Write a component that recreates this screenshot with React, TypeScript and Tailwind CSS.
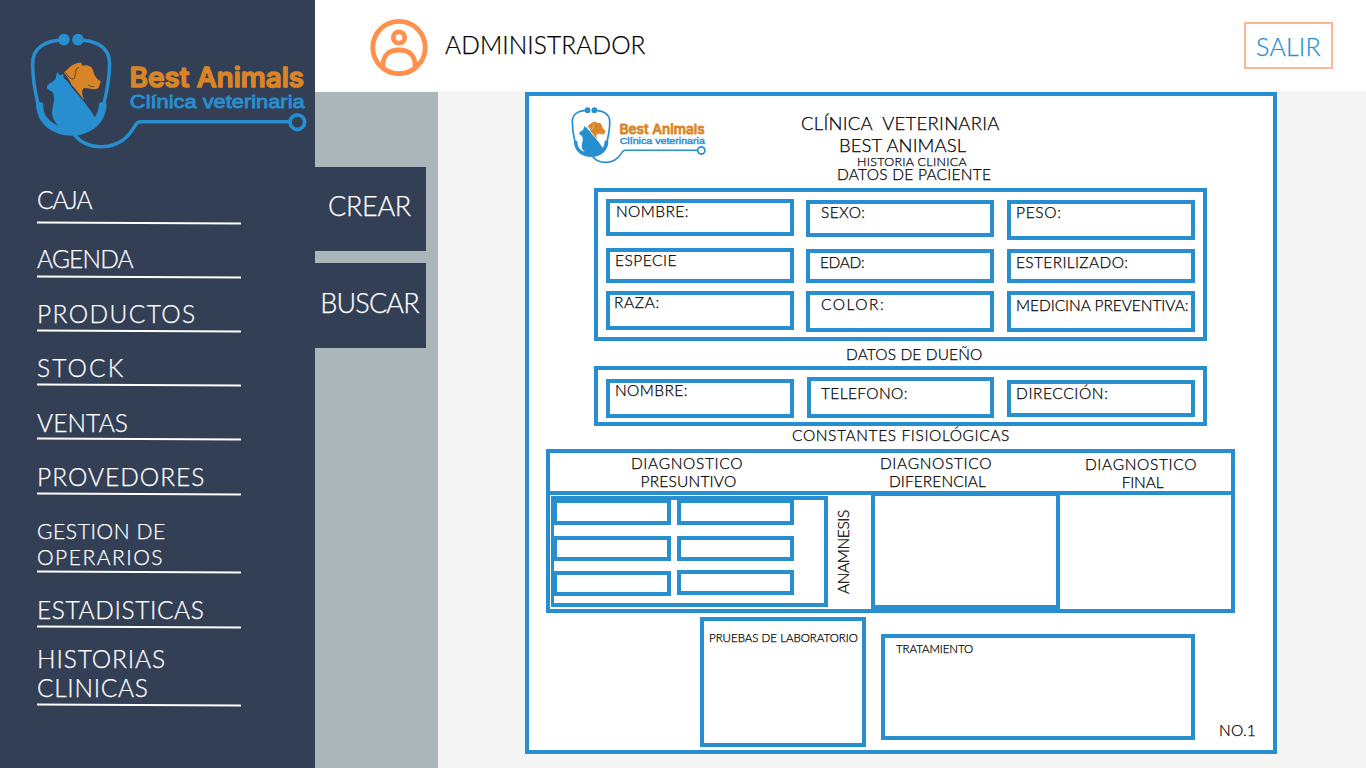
import React from "react";

function Logo({ className, ear }: { className: string; ear: string }) {
  return (
    <svg viewBox="30 40 832 350" className={className} role="img" aria-label="Best Animals Clínica veterinaria">
      <g fill="none" stroke="#278fcf" strokeWidth="10.5" strokeLinecap="round">
        <path d="M132 60 C76 60 38 84 38 130 C38 172 45 215 54 252" />
        <path d="M174 60 C230 60 269 84 269 130 C269 172 261 215 252 252" />
        <path d="M164 346 C184 370 212 382 246 381 C300 380 326 350 345 319 C350 309 354 306 363 306 H806" />
        <circle cx="833" cy="307" r="22" strokeWidth="11" />
      </g>
      <g fill="#278fcf">
        <circle cx="132" cy="59" r="17.5" />
        <circle cx="174" cy="59" r="17.5" />
        <path d="M48 252 C49 245 68 244 70 254 C70 268 71 278 77 288 C87 303 101 311 115 318 C101 301 92 290 98 264 C102 247 104 235 100 222 C98 213 92 216 86 210 C79 204 80 199 83 196 C90 189 98 187 105 180 C109 173 108 166 111 157 L121 167 L129 162 L132 176 C145 183 150 196 160 208 C185 236 207 262 225 292 C232 281 236 268 237 254 C238 244 257 243 260 252 C260 312 209 348 156 348 C98 348 49 312 48 252Z" />
      </g>
      <path
        fill="#d98527"
        d="M132 158 C146 147 155 130 183 128 L187 138 C202 132 217 139 220 153 C222 167 231 178 243 185 C241 191 238 193 238 199 C237 205 230 208 222 208 C210 209 200 201 190 206 C184 215 187 226 193 241 C182 228 168 208 154 194 C150 180 141 170 132 158Z"
      />
      <path d="M177 142 C162 148 170 168 161 177 C153 181 142 166 137 158" fill="none" stroke={ear} strokeWidth="3" />
      <path d="M205 195 C211 200 217 201 223 200" fill="none" stroke={ear} strokeWidth="2.5" />
      <text
        x="329" y="203" textLength="524" lengthAdjust="spacingAndGlyphs" fontSize="82"
        fill="#d98527" stroke="#d98527" strokeWidth="5" strokeLinejoin="round"
        className="font-['Inter',sans-serif] font-medium"
      >
        Best Animals
      </text>
      <text
        x="330" y="265" textLength="525" lengthAdjust="spacingAndGlyphs" fontSize="55"
        fill="#278fcf" stroke="#278fcf" strokeWidth="2.5"
        className="font-['Liberation_Sans',sans-serif]"
      >
        Clínica veterinaria
      </text>
    </svg>
  );
}

const menu = [
  { label: ["CAJA"], box: "h-[54px] pb-[10px]", text: "text-[24.5px] leading-none tracking-[-1px]" },
  { label: ["AGENDA"], box: "h-[54px] pb-[5px]", text: "text-[24.5px] leading-none tracking-[-0.8px]" },
  { label: ["PRODUCTOS"], box: "h-[54px] pb-[4px]", text: "text-[24.5px] leading-none tracking-[1.4px]" },
  { label: ["STOCK"], box: "h-[54px] pb-[4px]", text: "text-[24.5px] leading-none tracking-[2.1px]" },
  { label: ["VENTAS"], box: "h-[54px] pb-[3px]", text: "text-[24.5px] leading-none tracking-[0.1px]" },
  { label: ["PROVEDORES"], box: "h-[55px] pb-[4px]", text: "text-[24.5px] leading-none tracking-[1px]" },
  { label: ["GESTION DE", "OPERARIOS"], box: "h-[78px] pb-px", text: "text-[21px] leading-[26px] tracking-[0.6px] last:tracking-[1.5px]" },
  { label: ["ESTADISTICAS"], box: "h-[55px] pb-[4px]", text: "text-[24.5px] leading-none tracking-[0.6px]" },
  { label: ["HISTORIAS", "CLINICAS"], box: "h-[78px] pb-[2px]", text: "text-[24.5px] leading-[29px] tracking-[0.9px] last:tracking-[0.7px]" },
];

type FieldProps = { label?: string; className: string };

function Field({ label, className }: FieldProps) {
  return (
    <div className={`shrink-0 border-4 border-[#278fcf] text-[15.5px] leading-none whitespace-nowrap ${className}`}>
      {label && <span className="block">{label}</span>}
    </div>
  );
}

export default function App() {
  return (
    <div className="flex h-[768px] w-[1366px] overflow-hidden bg-[#f5f5f5] font-['Lato',sans-serif] font-light text-black [-webkit-text-stroke:0.25px]">
      <aside className="flex w-[315px] shrink-0 flex-col bg-[#333f55] text-white">
        <Logo className="mt-[33px] ml-[30px] h-[117px] w-[277px] shrink-0" ear="#4a4038" />
        <nav className="mt-[18px] ml-[37px] w-[204px]">
          {menu.map((m) => (
            <div key={m.label[0]}>
              <div className={`flex flex-col justify-end ${m.box}`}>
                {m.label.map((line) => (
                  <span key={line} className={`block whitespace-nowrap ${m.text}`}>
                    {line}
                  </span>
                ))}
              </div>
              <div className="-mb-[2px] h-[2px] rotate-[0.35deg] bg-white" />
            </div>
          ))}
        </nav>
      </aside>

      <div className="flex grow flex-col">
        <header className="flex h-[91px] items-start bg-white">
          <svg viewBox="0 0 58 58" className="mt-[18px] ml-[55px] size-[58px]" fill="none" stroke="#ff914d" strokeWidth="4.8">
            <circle cx="29" cy="29.5" r="26.2" />
            <circle cx="29" cy="19.5" r="5.7" />
            <path d="M13 50 C12 37 19 32 29 32 C39 32 46 37 45 50" />
          </svg>
          <h1 className="mt-[33px] ml-[17px] text-[24.5px] leading-none tracking-[0.1px]">ADMINISTRADOR</h1>
          <button className="mt-[22px] mr-[33px] ml-auto h-[47px] w-[89px] border-2 border-[#ffb496] text-[25px] leading-[42px] tracking-[0.2px] text-[#278fcf]">
            SALIR
          </button>
        </header>

        <div className="flex grow">
          <div className="mt-px flex w-[123px] shrink-0 flex-col gap-[12px] bg-[#abb6bb] pt-[75px] text-[27px] leading-none text-white">
            <button className="h-[84px] w-[111px] bg-[#333f55] pr-[2px] pb-[8px] tracking-[-0.3px]">CREAR</button>
            <button className="h-[85px] w-[111px] bg-[#333f55] pr-[2px] pb-[6px] tracking-[-0.8px]">BUSCAR</button>
          </div>

          <main className="mt-px ml-[87px] flex h-[662px] w-[752px] flex-col border-4 border-[#278fcf] bg-white">
            <div className="flex h-[92px] shrink-0">
              <Logo className="mt-[11px] ml-[42px] h-[57px] w-[135px]" ear="#f3e3cf" />
              <div className="ml-[95px] pt-[18px] whitespace-pre">
                <p className="text-[18.5px] leading-none tracking-[0.26px]">{"CLÍNICA  VETERINARIA"}</p>
                <p className="mt-[3px] pl-[38px] text-[18.5px] leading-none tracking-[0.1px]">BEST ANIMASL</p>
                <p className="mt-[2px] pl-[56px] text-[12.5px] leading-none tracking-[0.29px]">HISTORIA CLINICA</p>
                <p className="-mt-[2px] pl-[36px] text-[15.5px] leading-none tracking-[0.25px]">DATOS DE PACIENTE</p>
              </div>
            </div>

            <section className="ml-[65px] flex h-[153px] w-[613px] shrink-0 border-4 border-[#278fcf] pl-[8px]">
              <div className="flex w-[188px] flex-col pt-[7px]">
                <Field label="NOMBRE:" className="h-[37px] pt-px pl-[6px] tracking-[0.4px]" />
                <Field label="ESPECIE" className="mt-[12px] h-[35px] pt-px pl-[5px] tracking-[0.5px]" />
                <Field label="RAZA:" className="mt-[8px] h-[39px] pl-[4px] tracking-[0.6px]" />
              </div>
              <div className="ml-[12px] flex w-[188px] flex-col pt-[8px]">
                <Field label="SEXO:" className="h-[37px] pt-px pl-[11px] tracking-[0.4px]" />
                <Field label="EDAD:" className="mt-[12px] h-[34px] pt-[2px] pl-[10px] tracking-[-0.37px]" />
                <Field label="COLOR:" className="mt-[8px] h-[41px] pt-[2px] pl-[11px] tracking-[1.5px]" />
              </div>
              <div className="ml-[13px] flex w-[188px] flex-col pt-[8px]">
                <Field label="PESO:" className="h-[40px] pt-px pl-[5px] tracking-[0.7px]" />
                <Field label="ESTERILIZADO:" className="mt-[9px] h-[34px] pt-[2px] pl-[5px] tracking-[0.35px]" />
                <Field label="MEDICINA PREVENTIVA:" className="mt-[8px] h-[41px] pt-[3px] pl-[5px] tracking-[-0.05px]" />
              </div>
            </section>

            <h2 className="h-[25px] shrink-0 pt-[6px] pl-[317px] text-[15.5px] leading-none tracking-[0.12px]">DATOS DE DUEÑO</h2>

            <section className="ml-[65px] flex h-[60px] w-[613px] shrink-0 items-start border-4 border-[#278fcf] pl-[8px]">
              <Field label="NOMBRE:" className="mt-[9px] h-[39px] w-[188px] pl-[5px] tracking-[0.4px]" />
              <Field label="TELEFONO:" className="mt-[7px] ml-[13px] h-[41px] w-[187px] pt-[5px] pl-[10px] tracking-[0.38px]" />
              <Field label="DIRECCIÓN:" className="mt-[10px] ml-[13px] h-[37px] w-[188px] pt-[2px] pl-[5px] tracking-[0.6px]" />
            </section>

            <h2 className="h-[23px] shrink-0 pt-[2px] pl-[263px] text-[15.5px] leading-none tracking-[0.61px]">CONSTANTES FISIOLÓGICAS</h2>

            <section className="ml-[17px] flex h-[164px] w-[689px] shrink-0 flex-col border-4 border-[#278fcf]">
              <div className="flex h-[42px] shrink-0 border-b-4 border-[#278fcf] pt-px text-center text-[15.5px] leading-[18px]">
                <div className="w-[274px]">
                  <p className="tracking-[0.65px]">DIAGNOSTICO</p>
                  <p className="pl-[3px] tracking-[0.2px]">PRESUNTIVO</p>
                </div>
                <div className="w-[224px]">
                  <p className="tracking-[0.65px]">DIAGNOSTICO</p>
                  <p className="pl-[3px] tracking-[0.07px]">DIFERENCIAL</p>
                </div>
                <div className="grow pt-px pl-[3px]">
                  <p className="tracking-[0.65px]">DIAGNOSTICO</p>
                  <p className="pl-[3px] tracking-[-0.16px]">FINAL</p>
                </div>
              </div>
              <div className="flex h-[114px] items-start">
                <div className="mt-px ml-px flex h-[111px] w-[277px] gap-[6px] border-4 border-l-[3px] border-[#278fcf]">
                  <div className="-mt-px -ml-px flex w-[118px] shrink-0 flex-col">
                    <Field className="h-[26px]" />
                    <Field className="mt-[11px] h-[25px]" />
                    <Field className="mt-[10px] h-[25px]" />
                  </div>
                  <div className="-mt-px flex w-[117px] shrink-0 flex-col">
                    <Field className="h-[26px]" />
                    <Field className="mt-[11px] h-[25px]" />
                    <Field className="mt-[9px] h-[25px]" />
                  </div>
                </div>
                <div className="flex h-[114px] w-[43px] shrink-0 rotate-180 items-center justify-center pl-[11px] text-[15.5px] leading-none tracking-[-0.4px] [writing-mode:vertical-rl]">
                  ANAMNESIS
                </div>
                <div className="-mt-[3px] h-[117px] w-[189px] border-4 border-[#278fcf]" />
              </div>
            </section>

            <div className="mt-[4px] flex items-start">
              <section className="ml-[171px] h-[130px] w-[166px] border-4 border-[#278fcf] pt-[11px] pl-[5px] text-[11.5px] leading-none whitespace-nowrap">
                PRUEBAS DE LABORATORIO
              </section>
              <section className="mt-[17px] ml-[15px] h-[106px] w-[314px] border-4 border-[#278fcf] pt-[5px] pl-[11px] text-[11.5px] leading-none tracking-[-0.07px]">
                TRATAMIENTO
              </section>
              <span className="mt-[106px] ml-[24px] text-[15.5px] leading-none tracking-[0.2px]">NO.1</span>
            </div>
          </main>
        </div>
      </div>
    </div>
  );
}
